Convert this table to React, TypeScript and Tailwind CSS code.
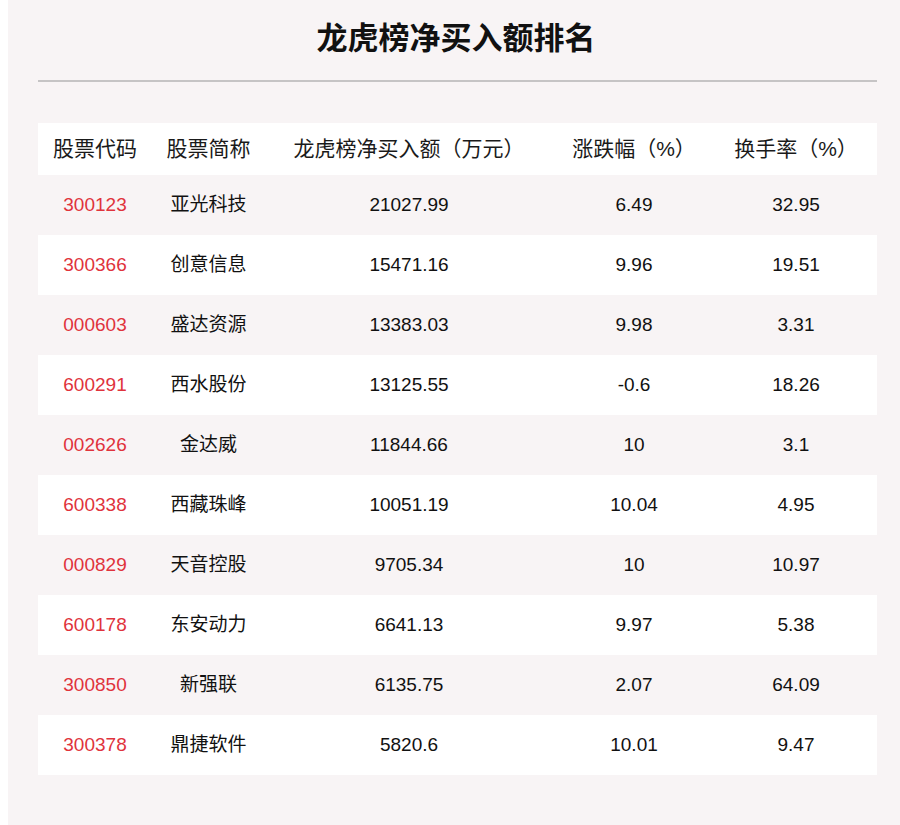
const rows = [
  ["300123", "亚光科技", "21027.99", "6.49", "32.95"],
  ["300366", "创意信息", "15471.16", "9.96", "19.51"],
  ["000603", "盛达资源", "13383.03", "9.98", "3.31"],
  ["600291", "西水股份", "13125.55", "-0.6", "18.26"],
  ["002626", "金达威", "11844.66", "10", "3.1"],
  ["600338", "西藏珠峰", "10051.19", "10.04", "4.95"],
  ["000829", "天音控股", "9705.34", "10", "10.97"],
  ["600178", "东安动力", "6641.13", "9.97", "5.38"],
  ["300850", "新强联", "6135.75", "2.07", "64.09"],
  ["300378", "鼎捷软件", "5820.6", "10.01", "9.47"],
];

const headers = ["股票代码", "股票简称", "龙虎榜净买入额（万元）", "涨跌幅（%）", "换手率（%）"];

const grid = "grid grid-cols-[114px_113px_288px_162px_162px]";

export default function App() {
  return (
    <div className="min-h-[825px] bg-white pl-[8px] font-['Liberation_Sans','Noto_Sans_CJK_SC',sans-serif]">
      <div className="min-h-[825px] bg-[#f8f4f5] pl-[30px] pr-[23px] pb-[50px]">
        {/* Title */}
        <div className="h-[80px] flex items-center justify-center">
          <h1 className="text-[31px] font-bold text-[#111] leading-none -mt-[4px] -ml-[3px]">
            龙虎榜净买入额排名
          </h1>
        </div>
        <div className="h-[2px] bg-[#c6c4c5]" />

        {/* Table */}
        <div className="mt-[41px]">
          <div className={`${grid} h-[52px] items-center bg-white text-[21px] text-[#1a1a1a]`}>
            {headers.map((h) => (
              <div key={h} className="text-center">
                {h}
              </div>
            ))}
          </div>
          {rows.map((r, i) => (
            <div
              key={r[0]}
              className={`${grid} h-[60px] items-center text-[19px] text-[#111] ${
                i % 2 === 0 ? "bg-[#f8f4f5]" : "bg-white"
              }`}
            >
              <div className="text-center text-[#e0333c]">{r[0]}</div>
              <div className="text-center">{r[1]}</div>
              <div className="text-center">{r[2]}</div>
              <div className="text-center">{r[3]}</div>
              <div className="text-center">{r[4]}</div>
            </div>
          ))}
        </div>
      </div>
    </div>
  );
}
